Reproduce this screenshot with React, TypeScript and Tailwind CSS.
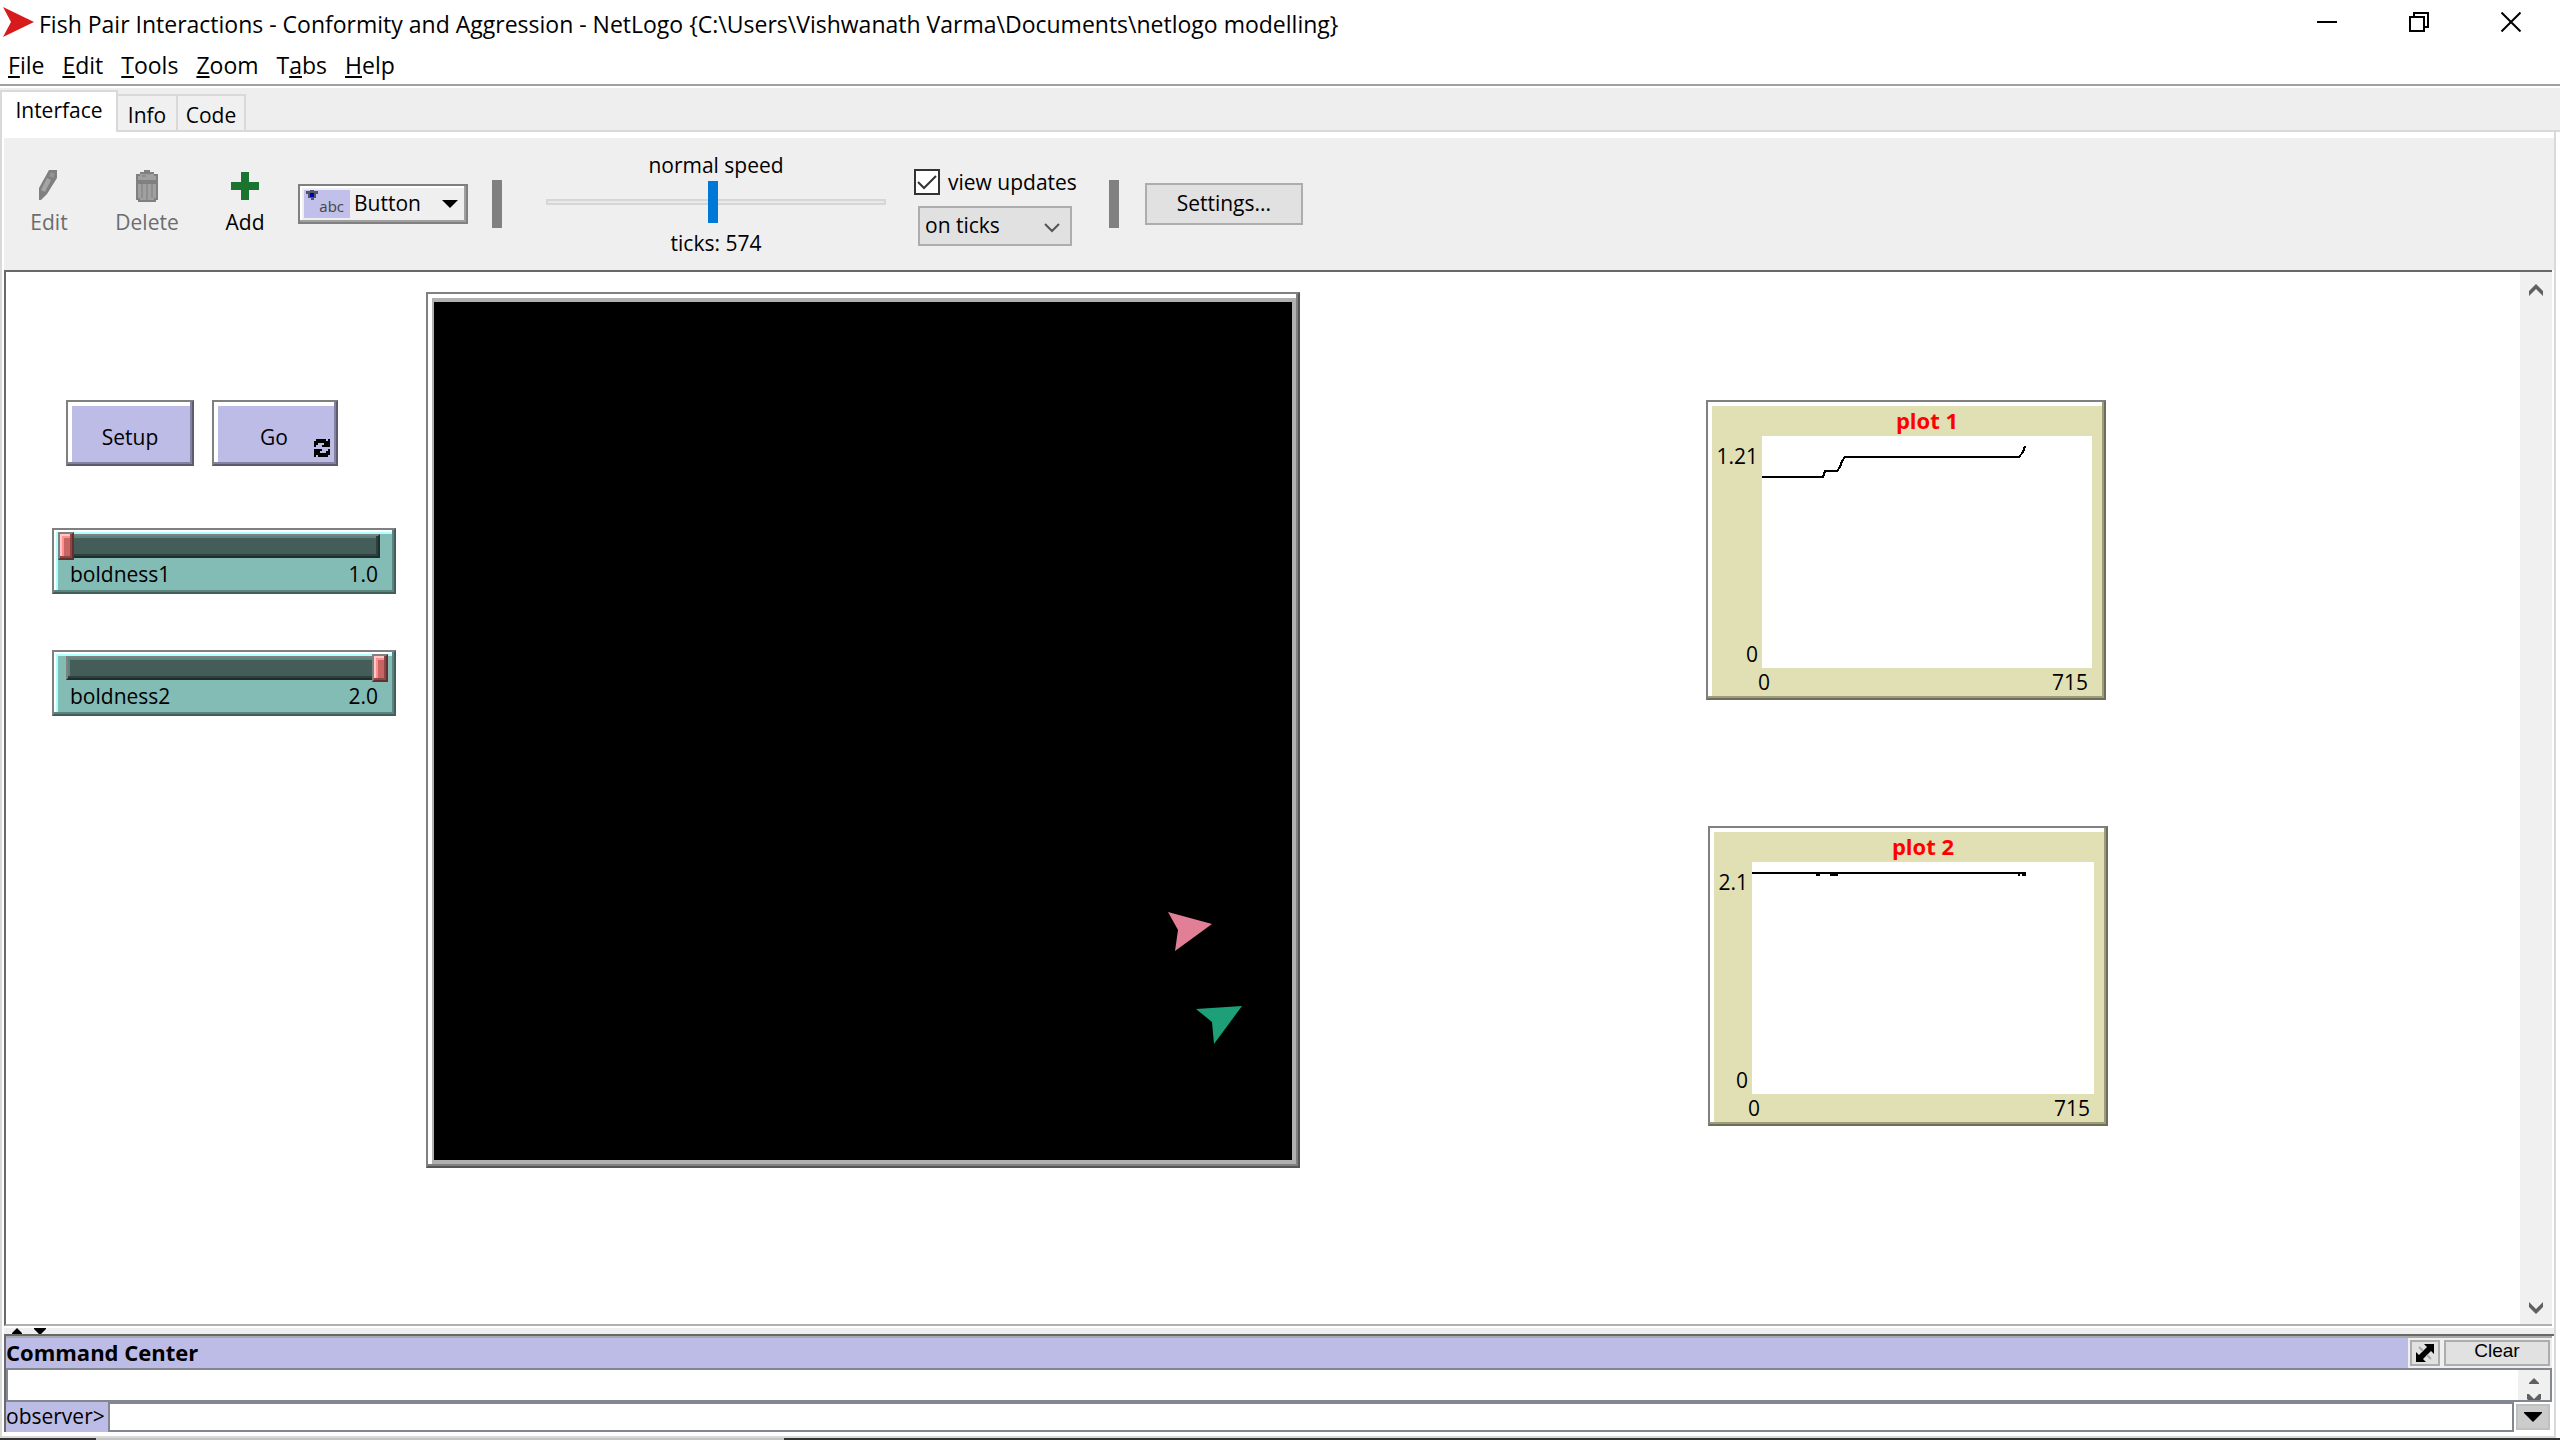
import React, { useState } from "react";

const bevel =
  "border-2 border-t-[#808080] border-l-[#808080] border-b-[#5c5c70] border-r-[#5c5c70] bg-[#bcbce6] shadow-[inset_-2px_-2px_#8383a1,inset_4px_4px_#fff]";

type ToolProps = {
  label: string;
  disabled?: boolean;
  children: React.ReactNode;
};

const Tool = ({ label, disabled, children }: ToolProps) => (
  <button
    type="button"
    disabled={disabled}
    className="flex w-[90px] flex-col items-center gap-1 text-black disabled:text-[#6d6d6d]"
  >
    {children}
    <span className="leading-8">{label}</span>
  </button>
);

const Separator = () => <div className="h-12 w-[10px] bg-[#808080]" />;

type SliderProps = {
  name: string;
  initial: number;
};

const ModelSlider = ({ name, initial }: SliderProps) => {
  const [value, setValue] = useState(initial);

  return (
    <div className="h-[66px] w-[344px] border-2 border-t-[#808080] border-l-[#808080] border-b-[#425e5b] border-r-[#425e5b] bg-[#83bbb5] px-1 pt-0.5 shadow-[inset_-2px_-2px_#5b847f,inset_2px_2px_#fff,inset_4px_4px_#b0ffff]">
      <div className="grid w-[330px]">
        <div className="col-start-1 row-start-1 mx-2 my-0.5 h-6 border-2 border-t-[#808080] border-l-[#808080] border-b-[#1e2e2c] border-r-[#1e2e2c] bg-[#445d59] shadow-[inset_-2px_-2px_#2f413e,inset_2px_2px_#5b847f]" />
        <input
          id={name}
          type="range"
          min={1}
          max={2}
          step={0.1}
          value={value}
          onChange={(e) => setValue(Number(e.target.value))}
          className="col-start-1 row-start-1 m-0 h-7 w-full appearance-none bg-transparent [&::-webkit-slider-thumb]:h-7 [&::-webkit-slider-thumb]:w-4 [&::-webkit-slider-thumb]:appearance-none [&::-webkit-slider-thumb]:border-2 [&::-webkit-slider-thumb]:border-t-[#808080] [&::-webkit-slider-thumb]:border-l-[#808080] [&::-webkit-slider-thumb]:border-b-[#632f2f] [&::-webkit-slider-thumb]:border-r-[#632f2f] [&::-webkit-slider-thumb]:bg-[#c86464] [&::-webkit-slider-thumb]:shadow-[inset_-2px_-2px_#8c4646,inset_2px_2px_#ffc8c8,inset_4px_4px_#ff8f8f]"
        />
      </div>
      <div className="flex justify-between pr-3 pl-3 leading-7">
        <label htmlFor={name}>{name}</label>
        <output htmlFor={name}>{value.toFixed(1)}</output>
      </div>
    </div>
  );
};

type PlotProps = {
  title: string;
  yMax: string;
  columns: string;
  children: React.ReactNode;
};

const Plot = ({ title, yMax, columns, children }: PlotProps) => (
  <section
    className={`grid h-[300px] w-[400px] grid-rows-[30px_1fr_30px] border-2 border-t-[#808080] border-l-[#808080] border-b-[#6e6e58] border-r-[#6e6e58] bg-[#e0e0b4] pt-1 pr-3 shadow-[inset_-2px_-2px_#9d9d7e,inset_4px_4px_#fff] ${columns}`}
  >
    <h2 className="col-start-2 text-center text-[22px] leading-7 font-bold text-[#ff0000]">{title}</h2>
    <div className="col-start-1 flex flex-col justify-between pt-1.5 pr-1 text-right leading-7">
      <span>{yMax}</span>
      <span>0</span>
    </div>
    <div className="bg-white">{children}</div>
    <div className="col-start-2 -ml-1 flex justify-between pr-1 leading-7">
      <span>0</span>
      <span>715</span>
    </div>
  </section>
);

const menus = [
  ["", "F", "ile"],
  ["", "E", "dit"],
  ["", "T", "ools"],
  ["", "Z", "oom"],
  ["T", "a", "bs"],
  ["", "H", "elp"],
];

const App: React.FC = () => {
  const [speed, setSpeed] = useState(49);
  const [updates, setUpdates] = useState(true);

  return (
    <div className="flex h-screen flex-col overflow-hidden bg-white font-['Open_Sans','Noto_Sans',sans-serif] text-[21px] text-black">
      {/* title bar */}
      <header className="flex h-12 shrink-0 items-start justify-between pr-[3px] pl-[3px]">
        <div className="flex items-start">
          <svg className="mt-[7px] h-[30px] w-8" viewBox="0 0 32 30">
            <path d="M0 0 L31 15 L0 30 L8 15 Z" fill="#d71a1c" />
          </svg>
          <h1 className="ml-1 text-[23px] leading-12 whitespace-nowrap">
            {"Fish Pair Interactions - Conformity and Aggression - NetLogo {C:\\Users\\Vishwanath Varma\\Documents\\netlogo modelling}"}
          </h1>
        </div>
        <div className="flex">
          <button type="button" aria-label="Minimize" className="flex h-11 w-[92px] items-center justify-center">
            <svg width="20" height="20" viewBox="0 0 20 20">
              <path d="M0 10 H20" stroke="#000" strokeWidth="2" />
            </svg>
          </button>
          <button type="button" aria-label="Restore" className="flex h-11 w-[92px] items-center justify-center">
            <svg width="20" height="20" viewBox="0 0 20 20" fill="none" stroke="#000" strokeWidth="2">
              <path d="M1 5 H15 V19 H1 Z M5 5 V1 H19 V15 H15" />
            </svg>
          </button>
          <button type="button" aria-label="Close" className="flex h-11 w-[92px] items-center justify-center">
            <svg width="20" height="20" viewBox="0 0 20 20" stroke="#000" strokeWidth="2">
              <path d="M0.5 0.5 L19.5 19.5 M19.5 0.5 L0.5 19.5" />
            </svg>
          </button>
        </div>
      </header>

      <nav className="flex h-[38px] shrink-0 items-start gap-[18px] border-b-2 border-[#a0a0a0] pl-2 text-[23px] leading-[34px]">
        {menus.map(([before, key, after]) => (
          <button type="button" key={key}>
            {before}
            <span className="underline decoration-2 underline-offset-2">{key}</span>
            {after}
          </button>
        ))}
      </nav>

      {/* tabs */}
      <div className="flex h-[46px] shrink-0 items-end border-t-2 border-white bg-[#eeeeee]" role="tablist">
        <button
          type="button"
          role="tab"
          aria-selected
          className="h-[42px] w-[118px] border-2 border-b-0 border-[#d9d9d9] bg-white pb-1 leading-8"
        >
          Interface
        </button>
        <div className="flex h-[38px] grow border-b-2 border-[#d9d9d9]">
          <button type="button" role="tab" className="w-[60px] border-t-2 border-r-2 border-[#d9d9d9] bg-[#f0f0f0] pt-1">
            Info
          </button>
          <button type="button" role="tab" className="w-[68px] border-t-2 border-r-2 border-[#d9d9d9] bg-[#f0f0f0] pt-1">
            Code
          </button>
        </div>
      </div>

      <main className="mr-1 flex min-h-0 grow flex-col border-x-2 border-b-2 border-[#d9d9d9] pt-1.5 pb-1 pl-0.5">
        {/* toolbar */}
        <div className="flex h-[132px] shrink-0 items-center bg-[#efefef]">
          <div className="flex gap-2">
            <Tool label="Edit" disabled>
              <svg width="20" height="32" viewBox="0 0 10 16">
                <path d="M5 0 H9 V4 L4 12 L1 15 H0 V9 Z" fill="#808080" />
                <path d="M6 1 L8 2 L7 4 L5 3 Z" fill="#949494" />
                <path d="M4 4 L6 5 L3 11 L1 10 Z" fill="#a4a4a4" />
              </svg>
            </Tool>
            <Tool label="Delete" disabled>
              <svg width="22" height="32" viewBox="0 0 11 16">
                <path d="M0 2 H2 V1 H4 V0 H7 V1 H9 V2 H11 V15 H10 V16 H1 V15 H0 Z" fill="#808080" />
                <path d="M1 7 H10 V14 H9 V15 H2 V14 H1 Z M2 2 H9 V3 H10 V5 H1 V3 H2 Z" fill="#a0a0a0" />
                <path d="M3 7 V14 M5.5 7 V15 M8 7 V14 M3 3 H5 M6 2 H7" stroke="#888" strokeWidth="0.7" />
              </svg>
            </Tool>
            <Tool label="Add">
              <svg width="28" height="32" viewBox="0 0 28 32">
                <path d="M10 2 H18 V12 H28 V20 H18 V30 H10 V20 H0 V12 H10 Z" fill="#1a732f" />
              </svg>
            </Tool>
          </div>
          <div className="mr-6 ml-2 flex h-10 w-[170px] items-center border-2 border-[#808080] bg-[#efefef] pl-1 shadow-[inset_-2px_-2px_#a0a0a0,inset_2px_2px_#fff]">
            <div className="relative h-7 w-[46px] shrink-0 bg-[#c0c0eb] text-right text-[15px] leading-8 text-[#444]">
              <svg className="absolute top-0 left-0.5" width="12" height="10" viewBox="0 0 12 10">
                <path d="M0 1 H4 V0 H8 V1 H12 V4 H10 V8 H8 V10 H5 V8 H2 V4 H0 Z" fill="#55556a" />
                <path d="M4 3 H8 V7 H4 Z" fill="#0000a8" />
              </svg>
              <span className="pr-1.5">abc</span>
            </div>
            <div className="grid grow items-center">
              <select
                aria-label="Widget type"
                className="col-start-1 row-start-1 w-full appearance-none bg-transparent pl-1 outline-none"
              >
                <option>Button</option>
              </select>
              <svg
                className="pointer-events-none col-start-1 row-start-1 mr-2 justify-self-end"
                width="16"
                height="8"
                viewBox="0 0 16 8"
              >
                <path d="M0 0 H16 L8 8 Z" />
              </svg>
            </div>
          </div>
          <Separator />
          <div className="ml-11 flex w-[340px] flex-col items-center">
            <label htmlFor="speed" className="leading-8">
              normal speed
            </label>
            <div className="grid w-full items-center">
              <div className="col-start-1 row-start-1 h-1.5 border-2 border-[#d6d6d6] bg-[#e7eaea]" />
              <input
                id="speed"
                type="range"
                value={speed}
                onChange={(e) => setSpeed(Number(e.target.value))}
                className="col-start-1 row-start-1 m-0 h-[42px] w-full appearance-none bg-transparent [&::-webkit-slider-thumb]:h-[42px] [&::-webkit-slider-thumb]:w-[10px] [&::-webkit-slider-thumb]:appearance-none [&::-webkit-slider-thumb]:bg-[#0078d7]"
              />
            </div>
            <span className="pt-1 leading-8">ticks: 574</span>
          </div>
          <div className="mr-8 ml-7 flex flex-col gap-2.5 pt-1.5">
            <label className="flex items-center gap-2 leading-7">
              <span className="grid">
                <input
                  type="checkbox"
                  checked={updates}
                  onChange={(e) => setUpdates(e.target.checked)}
                  className="peer col-start-1 row-start-1 size-[26px] appearance-none border-2 border-[#333] bg-white"
                />
                <svg
                  className="pointer-events-none invisible col-start-1 row-start-1 peer-checked:visible"
                  width="26"
                  height="26"
                  viewBox="0 0 26 26"
                >
                  <path d="M4 13 L10 19 L22 7" fill="none" stroke="#333" strokeWidth="2" />
                </svg>
              </span>
              view updates
            </label>
            <div className="ml-1 grid h-10 w-[154px] items-center border-2 border-[#adadad] bg-[#e1e1e1]">
              <select
                aria-label="Update mode"
                className="col-start-1 row-start-1 w-full appearance-none bg-transparent pl-[5px] outline-none"
              >
                <option>on ticks</option>
              </select>
              <svg
                className="pointer-events-none col-start-1 row-start-1 mt-1 mr-2.5 justify-self-end"
                width="16"
                height="10"
                viewBox="0 0 16 10"
              >
                <path d="M1 1 L8 8 L15 1" fill="none" stroke="#555" strokeWidth="2" />
              </svg>
            </div>
          </div>
          <Separator />
          <button type="button" className="ml-[26px] h-[42px] w-[158px] border-2 border-[#adadad] bg-[#e1e1e1]">
            Settings...
          </button>
        </div>

        {/* model canvas */}
        <div className="mr-0.5 flex min-h-0 grow border-2 border-r-0 border-t-[#696969] border-b-[#b0b0b0] border-l-[#696969]">
          <div className="flex min-w-0 grow items-start overflow-hidden pl-[46px]">
            <div className="shrink-0 pt-32">
              <div className="mb-[62px] ml-3.5 flex gap-[18px]">
                <button type="button" className={`h-[66px] w-32 pt-2.5 ${bevel}`}>
                  Setup
                </button>
                <button type="button" className={`flex h-[66px] w-[126px] items-center pt-2.5 pl-[46px] ${bevel}`}>
                  Go
                  <svg className="mt-5 mr-1.5 ml-auto" width="16" height="18" viewBox="0 0 16 18">
                    <path d="M2 0 H12 V2 H14 V0 H16 V8 H8 V6 H10 V4 H4 V6 H2 V8 H0 V2 H2 Z" />
                    <path d="M14 18 H4 V16 H2 V18 H0 V10 H8 V12 H6 V14 H12 V12 H14 V10 H16 V16 H14 Z" />
                  </svg>
                </button>
              </div>
              <div className="flex flex-col gap-14">
                <ModelSlider name="boldness1" initial={1} />
                <ModelSlider name="boldness2" initial={2} />
              </div>
            </div>

            <div className="mt-5 ml-[30px] shrink-0 border-2 border-t-[#808080] border-l-[#808080] border-b-[#555] border-r-[#555] bg-[#b0b0b0] pt-2 pr-1.5 pb-1.5 pl-1.5 shadow-[inset_-2px_-2px_#808080,inset_4px_4px_#fff]">
              <svg className="bg-black" width="858" height="858" viewBox="0 0 858 858">
                <path d="M734 610 L778 622 L741 649 L744 628 Z" fill="#e07f96" />
                <path d="M762 707 L808 704 L780 742 L778 720 Z" fill="#1d9f78" />
              </svg>
            </div>

            <div className="ml-[406px] flex shrink-0 flex-col gap-[126px] pt-32">
              <Plot title="plot 1" yMax="1.21" columns="grid-cols-[54px_1fr]">
                <svg width="330" height="232" fill="none" stroke="#000" strokeWidth="2" shapeRendering="crispEdges">
                  <path d="M0 41 H61 L63 35 H75 L78 31 L80 25 L83 21 H257 L261 16 L263 10" />
                </svg>
              </Plot>
              <div className="pl-0.5">
                <Plot title="plot 2" yMax="2.1" columns="grid-cols-[42px_1fr]">
                  <svg width="342" height="232" fill="none" stroke="#000" strokeWidth="2" shapeRendering="crispEdges">
                    <path d="M0 11 H274 M64 13 H68 M78 13 H86 M266 13 H268 M270 13 H274" />
                  </svg>
                </Plot>
              </div>
            </div>
          </div>
          <div className="flex w-8 shrink-0 flex-col items-center justify-between bg-[#f0f0f0] pt-3 pb-2.5">
            <button type="button" aria-label="Scroll up">
              <svg className="block" width="14" height="12" viewBox="0 0 14 12">
                <path d="M0 12 V7 L7 0 L14 7 V12 L7 5 Z" fill="#606060" />
              </svg>
            </button>
            <button type="button" aria-label="Scroll down">
              <svg className="block" width="14" height="12" viewBox="0 0 14 12">
                <path d="M0 0 V5 L7 12 L14 5 V0 L7 7 Z" fill="#606060" />
              </svg>
            </button>
          </div>
        </div>

        {/* split divider */}
        <div className="mt-0.5 h-1.5 shrink-0 bg-[#efefef] pl-2">
          <svg className="block" width="36" height="6" viewBox="0 0 36 6">
            <path d="M0 6 V5 L5 0 L10 5 V6 Z M22 0 H34 V1 L29 6 H27 L22 1 Z" />
          </svg>
        </div>

        {/* command center */}
        <section className="shrink-0 border-t-2 border-l-2 border-[#696969]">
          <div className="mr-0.5 flex h-8 border-t-2 border-[#a9a9a9] bg-[#efefef]">
            <h2 className="grow bg-[#bcbce6] text-[22px] leading-7 font-bold">Command Center</h2>
            <button
              type="button"
              aria-label="Toggle orientation"
              className="my-0.5 ml-0.5 flex w-[30px] items-center justify-center border-2 border-[#adadad] bg-[#e1e1e1]"
            >
              <svg width="18" height="18" viewBox="0 0 18 18">
                <path d="M8 0 H18 V10 L15 7 L7 15 L10 18 H0 V8 L3 11 L11 3 Z" />
                <path d="M3 3 L7 7 M11 11 L15 15" stroke="#aaa" strokeWidth="2" />
              </svg>
            </button>
            <button
              type="button"
              className="my-0.5 mr-0.5 ml-1 flex w-[106px] items-start justify-center border-2 border-[#adadad] bg-[#e1e1e1] font-['Liberation_Sans',Arial,sans-serif] text-[19px] leading-[18px]"
            >
              Clear
            </button>
          </div>
          <div className="mr-0.5 flex h-[34px] border-2 border-[#828790] bg-white">
            <div className="grow" />
            <div className="flex w-8 flex-col items-center justify-between bg-[#f0f0f0] pt-2">
              <svg width="10" height="6" viewBox="0 0 10 6">
                <path d="M0 6 V5 L5 0 L10 5 V6 Z" fill="#606060" />
              </svg>
              <svg width="14" height="6" viewBox="0 0 14 6">
                <path d="M0 0 H2 L7 5 L12 0 H14 V5 L13 6 H1 L0 5 Z" fill="#606060" />
              </svg>
            </div>
          </div>
          <div className="mr-1 flex h-[30px]">
            <label htmlFor="command" className="w-[102px] bg-[#bcbce6] leading-7">
              observer&gt;
            </label>
            <input
              id="command"
              type="text"
              className="min-w-0 grow border-2 border-[#828790] bg-white px-1 outline-none"
            />
            <button
              type="button"
              aria-label="Command history"
              className="my-0.5 ml-0.5 flex w-[34px] items-center justify-center border-2 border-[#c0c0c0] bg-[#cccccc]"
            >
              <svg width="18" height="10" viewBox="0 0 18 10">
                <path d="M0 0 H18 V1 L9 10 L0 1 Z" />
              </svg>
            </button>
          </div>
        </section>
      </main>

      <footer className="flex h-0.5 shrink-0">
        <div className="w-24 bg-[#333]" />
        <div className="w-[688px] bg-[#c4c4c4]" />
        <div className="grow bg-[#333]" />
      </footer>
    </div>
  );
};

export default App;
